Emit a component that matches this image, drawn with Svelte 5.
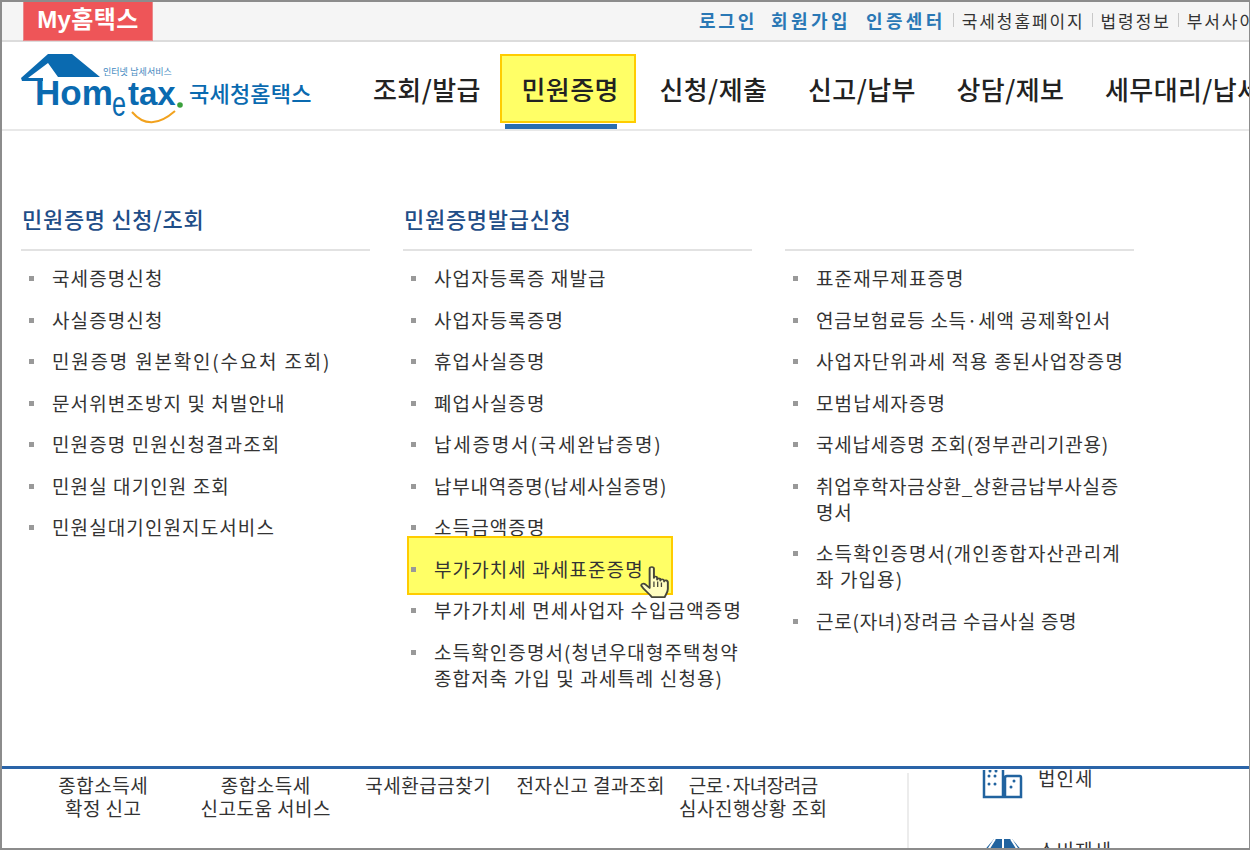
<script>
  const nav = ['조회/발급', '민원증명', '신청/제출', '신고/납부', '상담/제보', '세무대리/납세관리'];
  const cols = [
    { title: '민원증명 신청/조회', items: ['국세증명신청', '사실증명신청', '민원증명 원본확인(수요처 조회)', '문서위변조방지 및 처벌안내', '민원증명 민원신청결과조회', '민원실 대기인원 조회', '민원실대기인원지도서비스'] },
    { title: '민원증명발급신청', items: ['사업자등록증 재발급', '사업자등록증명', '휴업사실증명', '폐업사실증명', '납세증명서(국세완납증명)', '납부내역증명(납세사실증명)', '소득금액증명', '부가가치세 과세표준증명', '부가가치세 면세사업자 수입금액증명', '소득확인증명서(청년우대형주택청약 종합저축 가입 및 과세특례 신청용)'] },
    { title: '', items: ['표준재무제표증명', '연금보험료등 소득·세액 공제확인서', '사업자단위과세 적용 종된사업장증명', '모범납세자증명', '국세납세증명 조회(정부관리기관용)', '취업후학자금상환_상환금납부사실증명서', '소득확인증명서(개인종합자산관리계좌 가입용)', '근로(자녀)장려금 수급사실 증명'] }
  ];
  const loose = new Set(['민원증명 원본확인(수요처 조회)', '납세증명서(국세완납증명)']);
  const tight = new Set(['납부내역증명(납세사실증명)', '연금보험료등 소득·세액 공제확인서', '국세납세증명 조회(정부관리기관용)', '취업후학자금상환_상환금납부사실증명서', '근로(자녀)장려금 수급사실 증명']);
  const foot = [['종합소득세', '확정 신고'], ['종합소득세', '신고도움 서비스'], ['국세환급금찾기'], ['전자신고 결과조회'], ['근로·자녀장려금', '심사진행상황 조회']];
</script>

<div class="frame">
  <div class="topbar">
    <div class="my">My홈택스</div>
    <div class="util">
      <a class="strong">로그인</a><a class="strong">회원가입</a><a class="strong">인증센터</a>
      <i></i><a>국세청홈페이지</a><i></i><a>법령정보</a><i></i><a>부서사이트</a>
    </div>
  </div>

  <header class="head">
    <div class="logo">
      <svg width="300" height="78" viewBox="21 52 300 78">
        <path d="M21 78 L48 54 H72 L100 77 H58 L48 63 L28 78 H43 V81 H22 Z" fill="#0a6ab0"/>
        <path d="M132 112 Q150 133 175 111" fill="none" stroke="#f2a21e" stroke-width="2"/>
        <circle cx="180" cy="105" r="2.800" fill="#3aa03c"/>
        <text class="l-sub" x="103" y="75">인터넷 납세서비스</text>
        <text class="l-home" x="35" y="105">Hom</text>
        <text class="l-e" transform="translate(112 116) scale(.7 1)">e</text>
        <text class="l-tax" x="128" y="105">tax</text>
        <text class="l-kr" x="189" y="102">국세청홈택스</text>
      </svg>
    </div>
    <nav>
      {#each nav as n, i}
        <span class="nav-item" class:on={i === 1}>{n}</span>
      {/each}
    </nav>
  </header>

  <main class="menu">
    {#each cols as c, ci}
      <section class="col">
        <h3>{c.title}&nbsp;</h3>
        <ul>
          {#each c.items as it, ii}
            <li class:hl={ci === 1 && ii === 7}>
              <span class:loose={loose.has(it)} class:tight={tight.has(it)}>{it}</span>
              {#if ci === 1 && ii === 7}
                <svg class="hand" width="30" height="33" viewBox="0 0 28 36" preserveAspectRatio="none">
                  <path d="M9 3 C9 0.500 13 0.500 13 3 V13 C13 11 16 11 16 13 V15 C16 13 19 13 19 15 V16 C19 14 22 14 22.500 16 V17 C22.500 15 26 15 26 18 V25 C26 29 24 31 23 34 H11 C9 30 4 27 1.500 22 C0.500 20 3 18 5 20 L9 24 Z" fill="#fffdc0" stroke="#45453a" stroke-width="1.800" stroke-linejoin="round"/>
                  <path d="M13 17 V23 M16.500 17 V23 M20 18 V23" stroke="#45453a" stroke-width="1.200"/>
                </svg>
              {/if}
            </li>
          {/each}
        </ul>
      </section>
    {/each}
  </main>

  <footer class="foot">
    <div class="foot-left">
      {#each foot as f}
        <div class="f">{#each f as l}<div class:dot={l.includes('·')}>{l}</div>{/each}</div>
      {/each}
    </div>
    <div class="foot-right">
      <div class="tax">
        <svg width="42" height="29" viewBox="982 768 42 29">
          <path d="M984 768 V795 H1003 V768 M1007 774 H1020 Q1021 774 1021 776 V795 H1005 V776 Q1005 774 1007 774" fill="none" stroke="#21639f" stroke-width="2.500"/>
          <g fill="#21639f"><circle cx="990" cy="769" r="1.500"/><circle cx="996" cy="769" r="1.500"/><circle cx="989" cy="774" r="1.500"/><circle cx="995" cy="774" r="1.500"/><circle cx="989" cy="782" r="1.500"/><circle cx="995" cy="782" r="1.500"/><circle cx="1014" cy="779" r="1.500"/><circle cx="1011" cy="785" r="1.500"/></g>
        </svg>
        <span>법인세</span>
      </div>
      <div class="tax t2">
        <svg width="42" height="32" viewBox="0 0 42 32">
          <path d="M12 0 H30 L42 14 V32 H0 V14 Z" fill="#21639f"/>
          <path d="M21 0 V14 M13 0 L4 14 M29 0 L38 14" stroke="#fff" stroke-width="2"/>
        </svg>
        <span>소비제세</span>
      </div>
    </div>
  </footer>
</div>

<style>
  :global(body) { margin: 0; background: #fff; }
  .frame {
    width: 1250px; height: 850px; box-sizing: border-box; overflow: hidden;
    border: solid #8c8c8c; border-width: 2px 1px 2px 2px;
    font-family: "Noto Sans CJK KR", "Liberation Sans", sans-serif;
    color: #333; background: #fff; display: flex; flex-direction: column; isolation: isolate;
  }
  .topbar {
    height: 40px; flex: none; box-sizing: border-box; background: #f5f5f5;
    border-bottom: 2px solid #dcdcdc; display: flex; justify-content: space-between;
    padding-left: 21px; white-space: nowrap;
  }
  .my {
    width: 130px; height: 39px; background: #ee5558; color: #fff; font-weight: 700;
    font-size: 24px; line-height: 36px; text-align: center; box-sizing: border-box;
    border: 1px solid #e9898b; border-top: 0; letter-spacing: .4px;
    font-family: "Liberation Sans", "Noto Sans CJK KR", sans-serif;
  }
  .util {
    display: flex; align-items: center; width: 551px; flex: none; overflow: hidden;
    font-size: 17px; padding: 0 0 2px 1px; letter-spacing: 1.900px; box-sizing: border-box;
  }
  .util a { color: #333; flex: none; margin-right: 7px; }
  .util a.strong { color: #2a78b5; font-weight: 700; margin-right: 15px; font-size: 18px; letter-spacing: 3.400px; }
  .util a.strong:nth-child(1) { margin-right: 14px; letter-spacing: 2.800px; }
  .util a.strong:nth-child(3) { margin-right: 7px; }
  .util i { width: 1px; height: 14px; background: #c8c8c8; margin-right: 8px; flex: none; }
  .head {
    height: 89px; flex: none; box-sizing: border-box; border-bottom: 2px solid #e8e8e8;
    display: flex; padding-left: 19px; overflow: hidden;
  }
  .logo { width: 352px; flex: none; padding-top: 10px; }
  .logo svg { display: block; overflow: visible; }
  .logo text { font-family: "Liberation Sans", "Noto Sans CJK KR", sans-serif; fill: #0a6ab0; }
  .l-sub { font-size: 9px; opacity: .8; }
  .l-home { font-size: 35px; font-weight: 700; }
  .l-e { font-size: 36px; font-weight: 400; }
  .l-tax { font-size: 33px; font-weight: 700; }
  .logo .l-kr { font-size: 22px; font-weight: 500; font-family: "Noto Sans CJK KR", sans-serif; letter-spacing: .2px; }
  nav { display: flex; gap: 40.700px; align-items: center; white-space: nowrap; height: 87px; }
  .nav-item { font-size: 26px; color: #222; position: relative; font-weight: 500; margin-top: 5px; letter-spacing: .4px; }
  .nav-item.on::before {
    content: ''; position: absolute; z-index: -1; left: -22px; right: -17px; top: -16px; bottom: -16px;
    background: #ffff66; border: 2px solid #ffcc00; box-sizing: border-box;
  }
  .nav-item.on::after {
    content: ''; position: absolute; z-index: -1; left: -17px; right: 2px; bottom: -24px; height: 7px;
    background: #2a6db0;
  }
  .menu { height: 635px; flex: none; box-sizing: border-box; display: flex; gap: 33px; padding: 0 0 0 19px; }
  .col { width: 349px; flex: none; }
  h3 {
    margin: 0; height: 120px; box-sizing: border-box; padding: 71px 0 0 1px; font-size: 22px; line-height: 32px;
    font-weight: 500; color: #1f4e88; border-bottom: 2px solid #e2e2e2; letter-spacing: .7px;
  }
  ul { list-style: none; margin: 0; padding: 14px 0 0; }
  li {
    position: relative; padding: 0 0 15.500px 31px; font-size: 19px; line-height: 26px; color: #333;
  }
  li span { position: relative; letter-spacing: 1.100px; display: block; }
  li span.loose { letter-spacing: 1.800px; }
  li span.tight { letter-spacing: .75px; }
  li::before {
    content: ''; position: absolute; left: 8px; top: 11px; width: 5px; height: 5px; background: #999;
    z-index: 1;
  }
  li.hl::after {
    content: ''; position: absolute; left: 4px; width: 266px; top: -20px; height: 59px;
    background: #ffff66; border: 2px solid #ffcc00; box-sizing: border-box;
  }
  li.hl span { z-index: 2; }
  .hand { position: absolute; left: 237px; top: 10px; z-index: 3; }
  .foot { flex: 1; min-height: 0; border-top: 3px solid #2a64a8; display: flex; overflow: hidden; }
  .foot-left { width: 905px; flex: none; box-sizing: border-box; display: flex; padding-left: 20px; }
  .f { width: 162.500px; flex: none; font-size: 19px; line-height: 23px; text-align: center; white-space: nowrap; padding-top: 4px; color: #333; letter-spacing: .5px; }
  .f .dot { letter-spacing: -.5px; }
  .foot-right { flex: 1; border-left: 2px solid #ececec; margin-top: 4px; padding-left: 73px; }
  .tax { display: flex; gap: 14px; align-items: flex-start; height: 66px; }
  .tax svg { flex: none; margin-top: -3px; }
  .t2 svg { margin-top: 0; }
  .tax span { font-size: 19px; line-height: 22px; margin-top: -6px; letter-spacing: 1px; }
  .t2 span { margin-top: 0; }
</style>
